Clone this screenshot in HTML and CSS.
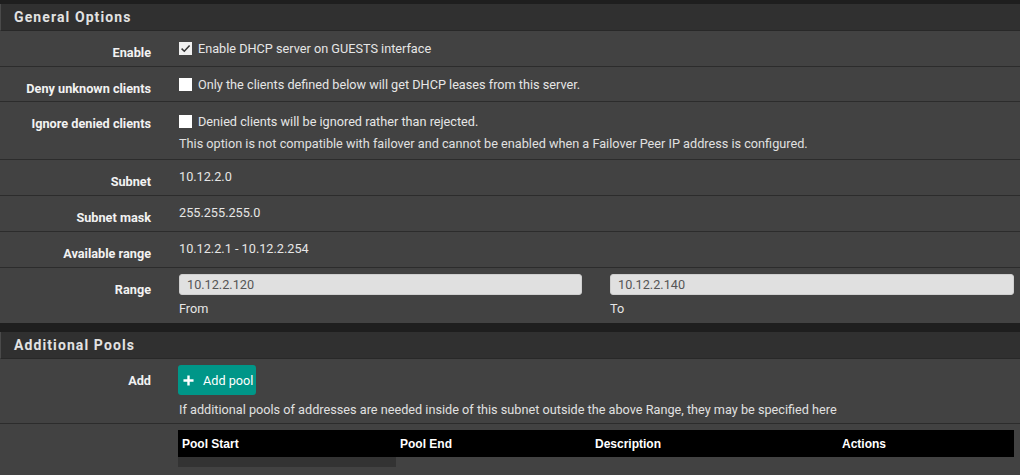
FILE: index.html
```html
<!DOCTYPE html>
<html>
<head>
<meta charset="utf-8">
<link rel="stylesheet" href="styles.css">
</head>
<body>
<section class="panel">
  <h2 class="panel-heading">General Options</h2>
  <div class="row h35">
    <div class="label">Enable</div>
    <div class="content pt9">
      <label class="check"><span class="box checked"><svg viewBox="0 0 13 13" width="13" height="13"><path d="M2.6 6.6 L5.3 9.2 L10.6 3.4" fill="none" stroke="#333" stroke-width="1.5"/></svg></span>Enable DHCP server on GUESTS interface</label>
    </div>
  </div>
  <div class="row h34">
    <div class="label">Deny unknown clients</div>
    <div class="content pt9">
      <label class="check"><span class="box"></span>Only the clients defined below will get DHCP leases from this server.</label>
    </div>
  </div>
  <div class="row h57">
    <div class="label">Ignore denied clients</div>
    <div class="content pt11">
      <label class="check"><span class="box"></span>Denied clients will be ignored rather than rejected.</label>
      <p class="help">This option is not compatible with failover and cannot be enabled when a Failover Peer IP address is configured.</p>
    </div>
  </div>
  <div class="row h35">
    <div class="label">Subnet</div>
    <div class="content pt8">10.12.2.0</div>
  </div>
  <div class="row h35">
    <div class="label">Subnet mask</div>
    <div class="content pt8">255.255.255.0</div>
  </div>
  <div class="row h35">
    <div class="label">Available range</div>
    <div class="content pt8">10.12.2.1 - 10.12.2.254</div>
  </div>
  <div class="row h55 last">
    <div class="label">Range</div>
    <div class="content range">
      <div class="field">
        <div class="input">10.12.2.120</div>
        <div class="sub">From</div>
      </div>
      <div class="field">
        <div class="input">10.12.2.140</div>
        <div class="sub">To</div>
      </div>
    </div>
  </div>
</section>

<section class="panel second">
  <h2 class="panel-heading">Additional Pools</h2>
  <div class="row h64">
    <div class="label">Add</div>
    <div class="content pt6">
      <button class="btn"><svg viewBox="0 0 12 12" width="11" height="11"><path d="M6 0.5 V11.5 M0.5 6 H11.5" stroke="#fff" stroke-width="2.6"/></svg><span>Add pool</span></button>
      <p class="help help-add">If additional pools of addresses are needed inside of this subnet outside the above Range, they may be specified here</p>
    </div>
  </div>
  <div class="row h60 last">
    <div class="label"></div>
    <div class="content pt6 tablewrap">
      <table class="pools">
        <thead>
          <tr><th class="c1">Pool Start</th><th class="c2">Pool End</th><th class="c3">Description</th><th class="c4">Actions</th></tr>
        </thead>
        <tbody>
          <tr><td class="empty"></td><td></td><td></td><td></td></tr>
        </tbody>
      </table>
    </div>
  </div>
</section>
</body>
</html>
```

FILE: styles.css
```css
html, body {
  margin: 0;
  padding: 0;
}
body {
  background: #1e1e1e;
  font-family: Roboto, "Liberation Sans", Arial, sans-serif;
  font-size: 12.7px;
  color: #e6e6e6;
  padding-top: 4px;
  overflow: hidden;
}
.panel {
  background: #424242;
}
.panel.second {
  margin-top: 9px;
}
.panel-heading {
  margin: 0;
  height: 26px;
  line-height: 26px;
  background: #303030;
  border-bottom: 1px solid #282828;
  border-left: 1px solid #4a4a4a;
  padding-left: 13px;
  font-size: 14px;
  font-weight: 700;
  letter-spacing: 1.1px;
  color: #e2e2e2;
}
.row {
  display: flex;
  border-bottom: 1px solid #2c2c2c;
  box-sizing: border-box;
}
.row.last {
  border-bottom: none;
}
.h34 { height: 35px; }
.h35 { height: 36px; }
.h55 { height: 55px; }
.h57 { height: 58px; }
.h64 { height: 65px; }
.h60 { height: 60px; border-bottom: 1px solid #2c2c2c; }
.label {
  width: 151px;
  flex: none;
  text-align: right;
  font-weight: 700;
  color: #f2f2f2;
  line-height: 17px;
  padding-top: 13px;
}
.content {
  flex: 1;
  margin-left: 28px;
  line-height: 17px;
}
.pt6 { padding-top: 6px; }
.pt8 { padding-top: 8px; }
.pt9 { padding-top: 9px; }
.pt11 { padding-top: 11px; }
.check {
  display: flex;
  align-items: center;
}
.box {
  width: 13px;
  height: 13px;
  background: #fff;
  margin-right: 6px;
  flex: none;
  display: inline-block;
}
.box.checked {
  background: #f0f0f0;
}
.box svg {
  display: block;
}
.help {
  margin: 5px 0 0;
  color: #e0e0e0;
}
.help-add {
  margin-top: 6px;
}
.range {
  display: grid;
  grid-template-columns: 403px 404px;
  column-gap: 28px;
  padding-top: 6px;
}
.input {
  height: 21px;
  box-sizing: border-box;
  background: #e0e0e0;
  border: 1px solid #cfcfcf;
  border-radius: 3px;
  color: #555;
  line-height: 20px;
  padding-left: 7px;
}
.sub {
  margin-top: 5px;
  color: #e6e6e6;
}
.btn {
  display: flex;
  align-items: center;
  height: 30px;
  width: 78px;
  margin-left: -1px;
  padding: 0 0 0 5px;
  box-sizing: border-box;
  background: #009688;
  border: none;
  border-radius: 3px;
  color: #fff;
  font-family: Roboto, "Liberation Sans", Arial, sans-serif;
  font-size: 12.7px;
}
.btn svg {
  margin-right: 9px;
  flex: none;
}
.tablewrap {
  margin-left: 27px;
  padding-right: 6px;
}
.pools {
  width: 836px;
  table-layout: fixed;
  border-collapse: collapse;
  font-family: "Liberation Sans", Arial, sans-serif;
  font-size: 12px;
}
.pools th {
  background: #000;
  color: #fff;
  font-weight: 700;
  text-align: left;
  height: 27px;
  padding: 1px 0 0 4px;
  box-sizing: border-box;
}
.pools .c1 { width: 218px; }
.pools .c2 { width: 195px; }
.pools .c3 { width: 247px; }
.pools td {
  height: 10px;
  padding: 0;
}
.pools td.empty {
  background: #333;
}
```
